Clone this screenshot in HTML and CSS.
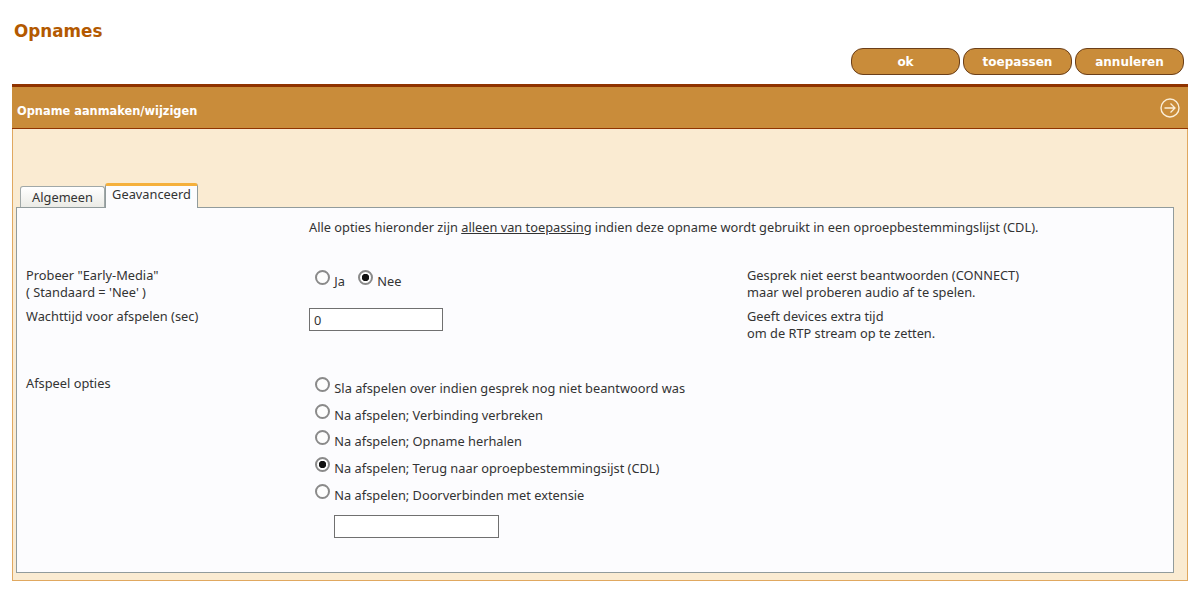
FILE: index.html
```html
<!DOCTYPE html>
<html lang="nl">
<head>
    <meta charset="UTF-8">
    <title>Opnames</title>
    <link rel="stylesheet" href="styles.css">
</head>
<body>
    <!-- Page title and actions -->
    <h1 class="page-title">Opnames</h1>
    <div class="actions">
        <button class="action-btn">ok</button>
        <button class="action-btn">toepassen</button>
        <button class="action-btn">annuleren</button>
    </div>

    <!-- Main panel -->
    <section class="panel">
        <div class="panel-head">
            <span class="panel-title">Opname aanmaken/wijzigen</span>
            <svg class="panel-icon" width="20" height="20" viewBox="0 0 20 20" fill="none" stroke="#fbeed8">
                <circle cx="10" cy="10" r="9" stroke-width="1.4"/>
                <path d="M4.5 10H15M10.5 5.5L15 10L10.5 14.5" stroke-width="1.3"/>
            </svg>
        </div>
        <div class="panel-body">
            <div class="tabs">
                <div class="tab">Algemeen</div>
                <div class="tab tab-active">Geavanceerd</div>
            </div>
            <div class="tab-content">
                <p class="notice">Alle opties hieronder zijn <u>alleen van toepassing</u> indien deze opname wordt gebruikt in een oproepbestemmingslijst (CDL).</p>

                <div class="form-row row-media">
                    <div>Probeer "Early-Media"<br>( Standaard = 'Nee' )</div>
                    <div class="inline-radios">
                        <label class="radio-label"><input type="radio" name="media"> Ja</label>
                        <label class="radio-label"><input type="radio" name="media" checked> Nee</label>
                    </div>
                    <div>Gesprek niet eerst beantwoorden (CONNECT)<br>maar wel proberen audio af te spelen.</div>
                </div>

                <div class="form-row row-wait">
                    <div>Wachttijd voor afspelen (sec)</div>
                    <div><input class="text-field wait-field" type="text" value="0"></div>
                    <div>Geeft devices extra tijd<br>om de RTP stream op te zetten.</div>
                </div>

                <div class="form-row row-play">
                    <div>Afspeel opties</div>
                    <div class="option-list">
                        <label class="radio-label"><input type="radio" name="play"> Sla afspelen over indien gesprek nog niet beantwoord was</label>
                        <label class="radio-label"><input type="radio" name="play"> Na afspelen; Verbinding verbreken</label>
                        <label class="radio-label"><input type="radio" name="play"> Na afspelen; Opname herhalen</label>
                        <label class="radio-label"><input type="radio" name="play" checked> Na afspelen; Terug naar oproepbestemmingsijst (CDL)</label>
                        <label class="radio-label"><input type="radio" name="play"> Na afspelen; Doorverbinden met extensie</label>
                        <input class="text-field ext-field" type="text">
                    </div>
                </div>
            </div>
        </div>
    </section>
</body>
</html>
```
FILE: styles.css
```css
body {
    margin: 0;
    padding: 0 12px;
    background-color: #fff;
    font-family: "Noto Sans", sans-serif;
    font-size: 12.8px;
    line-height: 17px;
    color: #333;
}

/* Title and buttons */
.page-title {
    margin: 0;
    padding: 20px 0 0 2px;
    height: 28px;
    font-family: "DejaVu Sans", sans-serif;
    font-size: 16.8px;
    line-height: 22px;
    color: #b35900;
}

.actions {
    display: flex;
    justify-content: flex-end;
    gap: 3px;
    padding-right: 4px;
    height: 36px;
}

.action-btn {
    width: 109px;
    height: 27px;
    padding: 0;
    background-color: #c98c3a;
    border: 1px solid #6b3f1a;
    border-radius: 12px;
    color: #fff;
    font-family: "DejaVu Sans", sans-serif;
    font-size: 12px;
    font-weight: bold;
}

/* Panel */
.panel {
    height: 497px;
    display: flex;
    flex-direction: column;
}

.panel-head {
    display: flex;
    justify-content: space-between;
    align-items: center;
    height: 41px;
    padding: 0 8px 0 5px;
    background-color: #c98c3a;
    border-top: 3px solid #8f3300;
    border-bottom: 1px solid #8f3300;
    color: #fff;
}

.panel-title {
    padding-top: 8px;
    font-family: "DejaVu Sans", sans-serif;
    font-size: 11.4px;
    font-weight: bold;
}

.panel-icon {
    display: block;
}

.panel-body {
    flex: 1;
    padding: 53px 13px 7px 3px;
    background-color: #faebd2;
    border: 1px solid #e0a860;
    border-top: none;
    display: flex;
    flex-direction: column;
}

/* Tabs */
.tabs {
    display: flex;
    align-items: flex-end;
    height: 25px;
    padding-left: 4px;
}

.tab {
    width: 85px;
    height: 21px;
    box-sizing: border-box;
    text-align: center;
    line-height: 21px;
    background: linear-gradient(#fff, #ebebe6);
    border: 1px solid #a0a8a8;
    border-bottom: none;
    border-radius: 3px 3px 0 0;
}

.tab-active {
    width: 93px;
    height: 25px;
    line-height: 16px;
    background: #fcfcfe;
    border-color: #919b9c;
    border-top: 3px solid #f5b03c;
    margin-bottom: -1px;
    position: relative;
}

.tab-content {
    flex: 1;
    padding: 11px 9px 0;
    background-color: #fcfcfe;
    border: 1px solid #919b9c;
}

.notice {
    margin: 0 0 31px 283px;
}

.form-row {
    display: grid;
    grid-template-columns: 283px 438px 1fr;
}

.row-wait {
    margin-top: 7px;
}

.row-play {
    margin-top: 33px;
}

.inline-radios {
    display: flex;
    gap: 7px;
    padding-top: 3px;
}

.radio-label {
    display: block;
    height: 17px;
}

/* Radio buttons, grey ring with a small black dot */
.radio-label input {
    appearance: none;
    box-sizing: border-box;
    margin: 0 1px 0 6px;
    width: 15px;
    height: 15px;
    vertical-align: 1px;
    background: #fdfdfd;
    border: 2px solid #8a8a8a;
    border-radius: 50%;
}

.radio-label input:checked {
    background: radial-gradient(circle, #111 3.4px, #fdfdfd 4px);
}

.option-list {
    padding-top: 2px;
    display: flex;
    flex-direction: column;
    gap: 9.7px;
    align-items: flex-start;
}

/* Text inputs */
.text-field {
    display: block;
    box-sizing: border-box;
    height: 23px;
    padding: 0 4px;
    background-color: #fff;
    border: 1px solid #707070;
    font-family: "Noto Sans", sans-serif;
    font-size: 12.8px;
    color: #333;
}

.wait-field {
    width: 134px;
}

.ext-field {
    width: 165px;
    margin: 5px 0 0 25px;
}
```
